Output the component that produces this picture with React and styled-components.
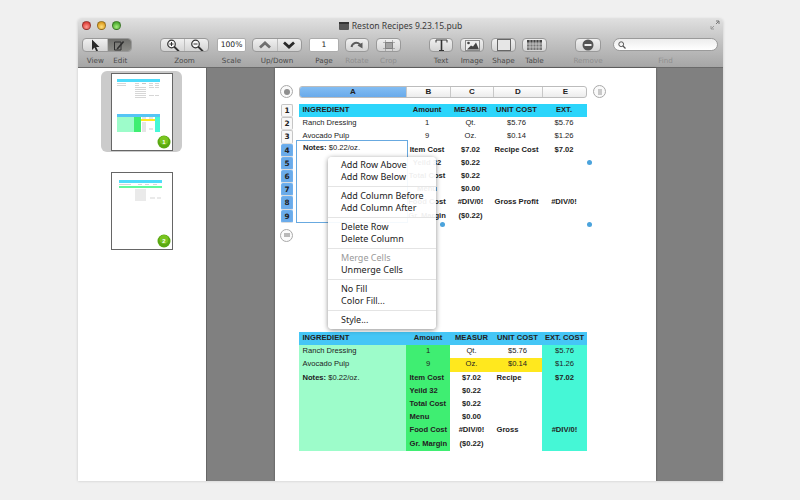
import React from 'react';
import styled, { createGlobalStyle } from 'styled-components';

const GlobalStyle = createGlobalStyle`
  html, body {
    margin: 0;
    padding: 0;
    width: 800px;
    height: 500px;
    overflow: hidden;
    background: #f0f0f0;
    font-family: "Liberation Sans", Arial, sans-serif;
  }
`;

const Desktop = styled.div`
  width: 800px;
  height: 500px;
  padding: 19px 77px 19px 78px;
  box-sizing: border-box;
`;

const Window = styled.div`
  height: 462px;
  display: flex;
  flex-direction: column;
  border-radius: 4px 4px 0 0;
  overflow: hidden;
  box-shadow: 0 0 3px rgba(0, 0, 0, 0.18);
`;

const Chrome = styled.div`
  height: 48px;
  flex: none;
  display: flex;
  flex-direction: column;
  background: linear-gradient(#dfdfdf, #c4c4c4 45%, #a6a6a6);
  border-bottom: 1px solid #6a6a6a;
`;

const TitleBar = styled.div`
  height: 19px;
  flex: none;
  box-sizing: border-box;
  padding-bottom: 6px;
  position: relative;
  display: flex;
  align-items: center;
  justify-content: center;
  gap: 3px;
  font-family: "Noto Sans", sans-serif;
  font-size: 8.6px;
  color: #3a3a3a;
`;

const Lights = styled.div`
  position: absolute;
  left: 4px;
  top: 2px;
  display: flex;
  gap: 6px;
`;

const Light = styled.span`
  width: 7px;
  height: 7px;
  border-radius: 50%;
  border: 0.5px solid rgba(0, 0, 0, 0.35);
  background: radial-gradient(circle at 50% 70%, ${(p) => p.$light}, ${(p) => p.$color} 70%);
`;

const Resize = styled.svg`
  position: absolute;
  right: 3px;
  top: 1px;
`;

const Toolbar = styled.div`
  display: flex;
  align-items: flex-start;
  padding-left: 4px;
`;

const Tool = styled.div`
  width: ${(p) => p.$w}px;
  margin-left: ${(p) => p.$ml || 0}px;
  display: flex;
  flex-direction: column;
  align-items: center;
  flex: none;
`;

const Label = styled.span`
  margin-top: 4px;
  font-family: "DejaVu Sans", sans-serif;
  font-size: 7.2px;
  line-height: 9px;
  white-space: nowrap;
  color: ${(p) => (p.$off ? '#8f8f8f' : '#4a4a4a')};
`;

const LabelRow = styled.div`
  display: flex;
  width: 100%;
  justify-content: space-around;
`;

const Btn = styled.div`
  height: 14px;
  width: 100%;
  box-sizing: border-box;
  display: flex;
  align-items: center;
  justify-content: space-around;
  border: 1px solid #999;
  border-radius: 4px;
  background: linear-gradient(#f0f0f0, #d4d4d4);
  overflow: hidden;
`;

const Seg = styled.div`
  flex: 1;
  height: 100%;
  display: flex;
  align-items: center;
  justify-content: center;
  background: ${(p) => (p.$on ? 'linear-gradient(#6f6f6c, #8c8c88)' : 'none')};
  & + & {
    border-left: 1px solid #bdbdbd;
  }
`;

const Field = styled.div`
  height: 14px;
  width: 100%;
  box-sizing: border-box;
  background: #fff;
  border: 1px solid #adadad;
  border-radius: 2px;
  font-family: "DejaVu Sans", sans-serif;
  font-size: 7.6px;
  line-height: 12px;
  text-align: center;
  color: #222;
`;

const Search = styled.div`
  height: 13px;
  width: 100%;
  box-sizing: border-box;
  padding-left: 4px;
  display: flex;
  align-items: center;
  background: linear-gradient(#ededed, #fff);
  border: 1px solid #9a9a9a;
  border-radius: 7px;
  margin-bottom: 1px;
`;

const Body = styled.div`
  flex: 1;
  display: flex;
  min-height: 0;
`;

const Sidebar = styled.div`
  width: 129px;
  flex: none;
  background: #fff;
  display: flex;
  flex-direction: column;
  align-items: flex-start;
  padding: 3px 0 0 23px;
  box-sizing: border-box;
  gap: 18px;
  border-right: 1px solid #666;
`;

const Thumb = styled.div`
  width: 81px;
  height: 81px;
  border-radius: 6px;
  background: ${(p) => (p.$on ? '#cbcbcb' : 'transparent')};
  display: flex;
  align-items: center;
  justify-content: center;
`;

const Canvas = styled.div`
  flex: 1;
  background: #808080;
  display: flex;
  justify-content: center;
  padding-left: 1px;
`;

const Page = styled.div`
  width: 381px;
  background: #fff;
  position: relative;
  padding: 17px 0 0 5px;
  box-sizing: border-box;
  box-shadow: 0 0 2px rgba(0, 0, 0, 0.4);
`;

const SheetTop = styled.div`
  display: flex;
  align-items: center;
  gap: 6px;
`;

const RoundBtn = styled.div`
  width: 13px;
  height: 13px;
  box-sizing: border-box;
  border: 1px solid #a9a9a9;
  border-radius: 50%;
  background: #fafafa;
  flex: none;
  display: flex;
  align-items: center;
  justify-content: center;
`;

const ColBar = styled.div`
  width: 288px;
  height: 12px;
  display: grid;
  grid-template-columns: 106px 44px 43px 49px 46px;
  border: 1px solid #bcbcbc;
  border-radius: 3px;
  box-sizing: border-box;
  overflow: hidden;
  background: linear-gradient(#fff, #ececec);
`;

const ColHead = styled.div`
  font-size: 8px;
  font-weight: bold;
  line-height: 10px;
  text-align: center;
  color: #222;
  border-left: ${(p) => (p.$first ? 'none' : '1px solid #c8c8c8')};
  background: ${(p) => (p.$on ? 'linear-gradient(#82bdf3, #69aaea)' : 'none')};
`;

const SheetBody = styled.div`
  display: flex;
  gap: 6px;
  margin: 6px 0 0 1px;
  position: relative;
`;

const RowHeads = styled.div`
  display: flex;
  flex-direction: column;
  width: 12px;
  flex: none;
`;

const RowHead = styled.div`
  height: 13.2px;
  box-sizing: border-box;
  border: 1px solid ${(p) => (p.$on ? '#6fb0ee' : '#c6c6c6')};
  border-bottom-color: #dcdcdc;
  border-radius: 2px;
  background: ${(p) => (p.$on ? '#6aabea' : '#f8f8f8')};
  font-family: "DejaVu Sans", sans-serif;
  font-size: 7.4px;
  font-weight: bold;
  line-height: 11px;
  text-align: center;
  color: #222;
`;

const RowAdd = styled(RoundBtn)`
  margin: 6px 0 0 -1px;
`;

const Grid = styled.div`
  display: grid;
  width: 288px;
  grid-template-columns: ${(p) => p.$cols};
  grid-auto-rows: 13.2px;
`;

const Cell = styled.div`
  padding-left: ${(p) => (p.$left ? 3.5 : 0)}px;
  background: ${(p) => p.$bg || 'transparent'};
  font-size: 7.6px;
  line-height: 12px;
  font-weight: ${(p) => (p.$b ? 'bold' : 'normal')};
  text-align: ${(p) => (p.$left ? 'left' : 'center')};
  color: #222;
  white-space: nowrap;
  overflow: hidden;
`;

const Selection = styled.div`
  position: absolute;
  left: 15px;
  top: 36px;
  width: 112px;
  height: 83px;
  padding: 1px 0 0 6px;
  border: 1px solid #68a9e0;
  box-sizing: border-box;
  font-size: 7.6px;
  line-height: 12px;
  color: #222;
`;

const Handle = styled.span`
  position: absolute;
  left: ${(p) => p.$x}px;
  top: ${(p) => p.$y}px;
  width: 5px;
  height: 5px;
  border-radius: 50%;
  background: #4ba3dc;
`;

const SecondTable = styled.div`
  position: absolute;
  top: 264px;
  left: 24px;
`;

const Menu = styled.div`
  position: absolute;
  left: 47px;
  top: 53px;
  width: 108px;
  padding: 2px 0 3px;
  box-sizing: border-box;
  background: rgba(255, 255, 255, 0.93);
  border-radius: 4px;
  box-shadow: 0 1px 5px rgba(0, 0, 0, 0.45);
  font-family: "Noto Sans", sans-serif;
  font-size: 9px;
  color: #222;
  z-index: 2;
`;

const MenuItem = styled.div`
  height: 12px;
  line-height: 12px;
  padding-left: 13px;
  white-space: nowrap;
  color: ${(p) => (p.$off ? '#9a9a9a' : '#222')};
`;

const MenuSep = styled.div`
  height: 1px;
  margin: 3px 0;
  background: #e4e4e4;
`;

const ZoomIcon = ({ minus }) => (
  <svg width="14" height="13" viewBox="0 0 14 13">
    <circle cx="5.5" cy="5" r="3.8" fill="#f7f7f7" stroke="#333" strokeWidth="1.2" />
    <path d="M8.5 8l4 4" stroke="#333" strokeWidth="1.8" strokeLinecap="round" />
    <path d={minus ? 'M3.5 5h4' : 'M3.5 5h4M5.5 3v4'} stroke="#333" strokeWidth="1" />
  </svg>
);

const MiniPage = ({ first }) => (
  <svg width="62" height="78" viewBox="0 0 62 78">
    <rect x="0.5" y="0.5" width="61" height="77" fill="#fff" stroke="#666" />
    {first ? (
      <>
        <rect x="6" y="6" width="43" height="3" fill="#4fdcfb" />
        <path d="M6 10.500h9M24 10.500h4M31 10.500h4M38 10.500h4M44 10.500h4M6 12.500h9M24 12.500h4M31 10.500h4M38 12.500h4M44 12.500h4M24 14.500h11M38 14.500h5M44 14.500h4M24 16.500h11M24 18.500h11M24 20.500h11M24 22.500h11M38 22.500h5M44 22.500h4M24 24.500h11" stroke="#bbb" strokeWidth="0.6" />
        <rect x="6" y="41" width="43" height="3" fill="#55c5f5" />
        <rect x="6" y="44" width="17" height="15" fill="#9dfcca" />
        <rect x="23" y="44" width="7" height="15" fill="#3fee72" />
        <rect x="30" y="46" width="14" height="2" fill="#ffe81e" />
        <rect x="44" y="44" width="5" height="15" fill="#45f7d6" />
        <path d="M31 45h4M38 45h4M31 50h4M31 52h4M31 54h4M31 56h4M38 56h4M31 58h4" stroke="#aaa" strokeWidth="0.6" />
      </>
    ) : (
      <>
        <rect x="8" y="8" width="43" height="3" fill="#4fdcfb" />
        <path d="M8 12.500h12M27 12.500h4M34 12.500h4M42 12.500h4" stroke="#bbb" strokeWidth="0.6" />
        <rect x="8" y="14" width="43" height="2" fill="#62fa9c" />
        <path d="M24 18h11M24 20h11M24 22h11M24 24h11M24 26h11M39 26h5M46 26h4M24 28h11" stroke="#bbb" strokeWidth="0.6" />
      </>
    )}
    <circle cx="53" cy="69" r="6.500" fill="#5aa812" />
    <circle cx="53" cy="67.500" r="4.500" fill="#79c41f" />
    <text x="53" y="71" fontSize="6" fontWeight="bold" fill="#fff" textAnchor="middle" fontFamily="Liberation Sans, sans-serif">
      {first ? 1 : 2}
    </text>
  </svg>
);

const C = '#2cd5fb';
const G = '#9dfcca';
const A = '#3fee72';
const X = '#45f7d6';
const H = '#45c6f6';
const Y = '#ffe81e';

const topRows = [
  [['INGREDIENT', 'l', 1, C], ['Amount', 'c', 1, C], ['MEASUR', 'c', 1, C], ['UNIT COST', 'c', 1, C], ['EXT.', 'c', 1, C]],
  [['Ranch Dressing', 'l'], ['1'], ['Qt.'], ['$5.76'], ['$5.76']],
  [['Avocado Pulp', 'l'], ['9'], ['Oz.'], ['$0.14'], ['$1.26']],
  [['', 'l'], ['Item Cost', 'c', 1], ['$7.02', 'c', 1], ['Recipe Cost', 'c', 1], ['$7.02', 'c', 1]],
  [['', 'l'], ['Yeild 32', 'c', 1], ['$0.22', 'c', 1], [''], ['']],
  [['', 'l'], ['Total Cost', 'c', 1], ['$0.22', 'c', 1], [''], ['']],
  [['', 'l'], ['Menu', 'c', 1], ['$0.00', 'c', 1], [''], ['']],
  [['', 'l'], ['Food Cost', 'c', 1], ['#DIV/0!', 'c', 1], ['Gross Profit', 'c', 1], ['#DIV/0!', 'c', 1]],
  [['', 'l'], ['Gr. Margin', 'c', 1], ['($0.22)', 'c', 1], [''], ['']],
];

const bottomRows = [
  [['INGREDIENT', 'l', 1, H], ['Amount', 'c', 1, H], ['MEASUR', 'c', 1, H], ['UNIT COST', 'c', 1, H], ['EXT. COST', 'c', 1, H]],
  [['Ranch Dressing', 'l', 0, G], ['1', 'c', 0, A], ['Qt.'], ['$5.76'], ['$5.76', 'c', 0, X]],
  [['Avocado Pulp', 'l', 0, G], ['9', 'c', 0, A], ['Oz.', 'c', 0, Y], ['$0.14', 'c', 0, Y], ['$1.26', 'c', 0, X]],
  [['NOTES', 'l', 0, G], ['Item Cost', 'l', 1, A], ['$7.02', 'c', 1], ['Recipe', 'l', 1], ['$7.02', 'c', 1, X]],
  [['', 'l', 0, G], ['Yeild 32', 'l', 1, A], ['$0.22', 'c', 1], ['', 'l'], ['', 'c', 0, X]],
  [['', 'l', 0, G], ['Total Cost', 'l', 1, A], ['$0.22', 'c', 1], ['', 'l'], ['', 'c', 0, X]],
  [['', 'l', 0, G], ['Menu', 'l', 1, A], ['$0.00', 'c', 1], ['', 'l'], ['', 'c', 0, X]],
  [['', 'l', 0, G], ['Food Cost', 'l', 1, A], ['#DIV/0!', 'c', 1], ['Gross', 'l', 1], ['#DIV/0!', 'c', 1, X]],
  [['', 'l', 0, G], ['Gr. Margin', 'l', 1, A], ['($0.22)', 'c', 1], ['', 'l'], ['', 'c', 0, X]],
];

const renderRows = (rows) =>
  rows.flat().map(([text, align, bold, bg], i) => (
    <Cell key={i} $left={align === 'l'} $b={!!bold} $bg={bg}>
      {text === 'NOTES' ? (
        <>
          <b>Notes:</b> $0.22/oz.
        </>
      ) : (
        text
      )}
    </Cell>
  ));

const menuGroups = [
  [['Add Row Above'], ['Add Row Below']],
  [['Add Column Before'], ['Add Column After']],
  [['Delete Row'], ['Delete Column']],
  [['Merge Cells', true], ['Unmerge Cells']],
  [['No Fill'], ['Color Fill...']],
  [['Style...']],
];

export default function App() {
  return (
    <>
      <GlobalStyle />
      <Desktop>
        <Window>
          <Chrome>
            <TitleBar>
              <Lights>
                <Light $color="#e0443e" $light="#ff9d93" />
                <Light $color="#dfa023" $light="#ffdf7c" />
                <Light $color="#4fae32" $light="#a6ec7c" />
              </Lights>
              <svg width="10" height="8" viewBox="0 0 10 8">
                <rect width="10" height="8" rx="1" fill="#555" />
                <rect width="10" height="2" fill="#333" />
              </svg>
              Reston Recipes 9.23.15.pub
              <Resize width="10" height="10" viewBox="0 0 10 10">
                <path d="M6 1h3v3M9 1L6 4" fill="none" stroke="#777" strokeWidth="1" />
                <path d="M1 6v3h3M1 9l3-3" fill="none" stroke="#999" strokeWidth="1" />
              </Resize>
            </TitleBar>
            <Toolbar>
              <Tool $w={50}>
                <Btn>
                  <Seg>
                    <svg width="10" height="13" viewBox="0 0 10 13">
                      <path d="M2 0.500v10.500l2.500-2.500 1.800 4 1.700-.8-1.800-3.700h3.300z" fill="#2a2a2a" />
                    </svg>
                  </Seg>
                  <Seg $on>
                    <svg width="12" height="11" viewBox="0 0 12 11">
                      <path d="M1.500 2h6.500v8H1.500z" fill="none" stroke="#2f2f2f" strokeWidth="1" />
                      <path d="M4 8l6-7 1.200 1-6 7-1.700.6z" fill="#2f2f2f" />
                    </svg>
                  </Seg>
                </Btn>
                <LabelRow>
                  <Label>View</Label>
                  <Label>Edit</Label>
                </LabelRow>
              </Tool>
              <Tool $w={49} $ml={28}>
                <Btn>
                  <Seg><ZoomIcon /></Seg>
                  <Seg><ZoomIcon minus /></Seg>
                </Btn>
                <Label>Zoom</Label>
              </Tool>
              <Tool $w={29} $ml={8}>
                <Field>100%</Field>
                <Label>Scale</Label>
              </Tool>
              <Tool $w={50} $ml={6}>
                <Btn>
                  <Seg>
                    <svg width="12" height="8" viewBox="0 0 12 8">
                      <path d="M1 6.500L6 2l5 4.500" fill="none" stroke="#6e6e6e" strokeWidth="2.800" />
                    </svg>
                  </Seg>
                  <Seg>
                    <svg width="12" height="8" viewBox="0 0 12 8">
                      <path d="M1 1.500L6 6l5-4.500" fill="none" stroke="#2a2a2a" strokeWidth="2.800" />
                    </svg>
                  </Seg>
                </Btn>
                <Label>Up/Down</Label>
              </Tool>
              <Tool $w={30} $ml={7}>
                <Field>1</Field>
                <Label>Page</Label>
              </Tool>
              <Tool $w={24} $ml={6}>
                <Btn>
                  <svg width="14" height="10" viewBox="0 0 14 10">
                    <path d="M1.500 7C2.500 2.500 7 1.500 10 4.500" fill="none" stroke="#5c5c5c" strokeWidth="2" />
                    <path d="M7.500 5.500l5 3V2.500z" fill="#5c5c5c" />
                  </svg>
                </Btn>
                <Label $off>Rotate</Label>
              </Tool>
              <Tool $w={25} $ml={7}>
                <Btn>
                  <svg width="12" height="11" viewBox="0 0 12 11">
                    <rect x="2.500" y="2.500" width="7" height="6" fill="#a4a4a4" stroke="#777" />
                    <path d="M2.500 0v11M9.500 0v11M0 2.500h12M0 8.500h12" stroke="#888" strokeWidth="0.6" />
                  </svg>
                </Btn>
                <Label $off>Crop</Label>
              </Tool>
              <Tool $w={24} $ml={28}>
                <Btn>
                  <svg width="13" height="12" viewBox="0 0 13 12">
                    <path d="M1 3.500V1h11v2.500" fill="none" stroke="#333" strokeWidth="1" />
                    <path d="M6.500 1v10" stroke="#333" strokeWidth="1.600" />
                    <path d="M4 11.500h5" stroke="#333" strokeWidth="1" />
                  </svg>
                </Btn>
                <Label>Text</Label>
              </Tool>
              <Tool $w={24} $ml={7}>
                <Btn>
                  <svg width="15" height="11" viewBox="0 0 15 11">
                    <rect x="0.500" y="0.500" width="14" height="10" fill="#eee" stroke="#888" />
                    <path d="M2 9.500l4-4 2 1 3-4 3 7z" fill="#444" />
                    <circle cx="3.500" cy="3" r="1.300" fill="#444" />
                  </svg>
                </Btn>
                <Label>Image</Label>
              </Tool>
              <Tool $w={25} $ml={7}>
                <Btn>
                  <svg width="14" height="12" viewBox="0 0 14 12">
                    <rect x="0.500" y="0.500" width="13" height="11" fill="#e6e6e6" stroke="#666" />
                  </svg>
                </Btn>
                <Label>Shape</Label>
              </Tool>
              <Tool $w={25} $ml={6}>
                <Btn>
                  <svg width="15" height="10" viewBox="0 0 15 10">
                    <rect width="15" height="10" fill="#777" />
                    <rect width="15" height="2" fill="#444" />
                    <path d="M3 0v10M6 0v10M9 0v10M12 0v10M0 4h15M0 7h15" stroke="#ddd" strokeWidth="0.7" />
                  </svg>
                </Btn>
                <Label>Table</Label>
              </Tool>
              <Tool $w={26} $ml={28}>
                <Btn>
                  <svg width="12" height="12" viewBox="0 0 12 12">
                    <circle cx="6" cy="6" r="5.500" fill="#555" />
                    <rect x="2.500" y="5" width="7" height="2" fill="#eee" />
                  </svg>
                </Btn>
                <Label $off>Remove</Label>
              </Tool>
              <Tool $w={105} $ml={12}>
                <Search>
                  <svg width="8" height="8" viewBox="0 0 8 8">
                    <circle cx="3.200" cy="3.200" r="2.400" fill="none" stroke="#555" />
                    <path d="M5 5l2.500 2.500" stroke="#555" strokeWidth="1.200" />
                  </svg>
                </Search>
                <Label $off>Find</Label>
              </Tool>
            </Toolbar>
          </Chrome>
          <Body>
            <Sidebar>
              <Thumb $on><MiniPage first /></Thumb>
              <Thumb><MiniPage /></Thumb>
            </Sidebar>
            <Canvas>
              <Page>
                <SheetTop>
                  <RoundBtn>
                    <svg width="6" height="6" viewBox="0 0 6 6"><circle cx="3" cy="3" r="3" fill="#8e8e8e" /></svg>
                  </RoundBtn>
                  <ColBar>
                    <ColHead $on $first>A</ColHead>
                    <ColHead>B</ColHead>
                    <ColHead>C</ColHead>
                    <ColHead>D</ColHead>
                    <ColHead>E</ColHead>
                  </ColBar>
                  <RoundBtn>
                    <svg width="6" height="6" viewBox="0 0 6 6"><path d="M2 0v6M4 0v6" stroke="#999" /></svg>
                  </RoundBtn>
                </SheetTop>
                <SheetBody>
                  <RowHeads>
                    {[1, 2, 3, 4, 5, 6, 7, 8, 9].map((n) => (
                      <RowHead key={n} $on={n > 3}>{n}</RowHead>
                    ))}
                    <RowAdd>
                      <svg width="6" height="4" viewBox="0 0 6 4"><path d="M0 1h6M0 3h6" stroke="#777" /></svg>
                    </RowAdd>
                  </RowHeads>
                  <Grid $cols="106px 44px 43px 49px 46px">{renderRows(topRows)}</Grid>
                  <Selection>
                    <b>Notes:</b> $0.22/oz.
                  </Selection>
                  <Handle $x={305.5} $y={56} />
                  <Handle $x={158.5} $y={118} />
                  <Handle $x={305.5} $y={118} />
                  <Menu>
                    {menuGroups.map((group, i) => (
                      <React.Fragment key={i}>
                        {i > 0 && <MenuSep />}
                        {group.map(([label, off]) => (
                          <MenuItem key={label} $off={off}>{label}</MenuItem>
                        ))}
                      </React.Fragment>
                    ))}
                  </Menu>
                </SheetBody>
                <SecondTable>
                  <Grid $cols="107px 44px 43px 49px 45px">{renderRows(bottomRows)}</Grid>
                </SecondTable>
              </Page>
            </Canvas>
          </Body>
        </Window>
      </Desktop>
    </>
  );
}
